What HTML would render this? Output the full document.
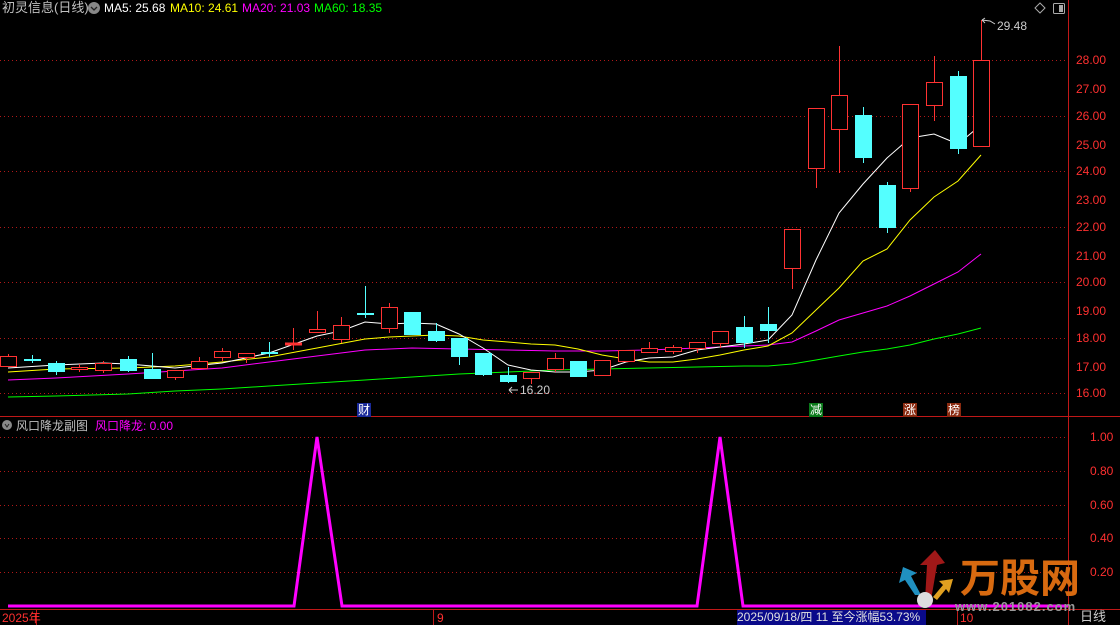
<!DOCTYPE html>
<html><head><meta charset="utf-8"><style>
html,body{margin:0;padding:0;background:#000;}
body{width:1120px;height:625px;overflow:hidden;position:relative;font-family:"Liberation Sans","Noto Sans CJK SC",sans-serif;}
.t{position:absolute;white-space:nowrap;font-size:12px;line-height:14px;}
</style></head><body>
<svg width="1120" height="625" style="position:absolute;left:0;top:0" xmlns="http://www.w3.org/2000/svg">
<g stroke="#b01818" stroke-width="1" stroke-dasharray="1,3">
<line x1="0" y1="60.5" x2="1068" y2="60.5"/><line x1="0" y1="116.5" x2="1068" y2="116.5"/>
<line x1="0" y1="171.5" x2="1068" y2="171.5"/><line x1="0" y1="227.5" x2="1068" y2="227.5"/>
<line x1="0" y1="282.5" x2="1068" y2="282.5"/><line x1="0" y1="338.5" x2="1068" y2="338.5"/>
<line x1="0" y1="393.5" x2="1068" y2="393.5"/>
<line x1="0" y1="437.5" x2="1068" y2="437.5"/><line x1="0" y1="471.5" x2="1068" y2="471.5"/>
<line x1="0" y1="505.5" x2="1068" y2="505.5"/><line x1="0" y1="538.5" x2="1068" y2="538.5"/>
<line x1="0" y1="572.5" x2="1068" y2="572.5"/>
</g>
<g stroke="#c01818" stroke-width="1">
<line x1="1068.5" y1="0" x2="1068.5" y2="625"/>
<line x1="0" y1="416.5" x2="1120" y2="416.5"/>
<line x1="0" y1="609.5" x2="1120" y2="609.5"/>
<line x1="36.5" y1="609" x2="36.5" y2="625"/><line x1="433.5" y1="609" x2="433.5" y2="625"/>
<line x1="957.5" y1="609" x2="957.5" y2="625"/>
</g>
<polyline fill="none" stroke="#00ff00" stroke-width="1" points="8,397 56,396 128,394 175,391 222,389 269,386 317,383 365,380 412,377 459,374 508,372 555,370 602,369 649,368 697,367 744,366 768,366 792,364 816,360 839,356 863,352 887,349 910,345 934,339 958,334 981,328"/>
<polyline fill="none" stroke="#ff00ff" stroke-width="1" points="8,380 56,378 128,374 175,371 222,368 269,362 317,356 365,350 412,348 459,349 508,350 555,351 602,351 649,350 697,348 744,346 768,345 792,342 816,331 839,320 863,313 887,306 910,296 934,284 958,272 981,254"/>
<polyline fill="none" stroke="#ffff00" stroke-width="1" points="8,372 56,369 128,368 175,366 222,362 269,357 317,348 365,339 389,337 412,336 436,335 459,336 483,340 508,342 531,344 555,345 578,349 602,355 626,359 649,362 673,362 697,359 720,355 744,350 768,346 792,333 816,310 839,288 863,261 887,249 910,220 934,197 958,181 981,155"/>
<polyline fill="none" stroke="#ffffff" stroke-width="1" points="8,368 56,365 103,363 128,364 152,366 175,368 222,363 269,353 317,336 341,331 365,322 389,324 412,323 436,324 459,334 483,348 508,365 531,370 555,372 578,372 602,370 626,362 649,358 673,357 697,350 720,347 744,344 768,340 792,315 816,260 839,213 863,184 887,158 910,138 934,134 958,144 981,125"/>
<g stroke-width="1" shape-rendering="crispEdges">
<g stroke="#ff3232" fill="#000">
<line x1="8.5" y1="354" x2="8.5" y2="356"/><rect x="0.5" y="356.5" width="16" height="10"/>
<line x1="79.5" y1="364" x2="79.5" y2="372"/><rect x="71.5" y="367.5" width="16" height="2"/>
<line x1="103.5" y1="361" x2="103.5" y2="373"/><rect x="95.5" y="363.5" width="16" height="7"/>
<line x1="175.5" y1="370" x2="175.5" y2="380"/><rect x="167.5" y="370.5" width="16" height="7"/>
<line x1="199.5" y1="357" x2="199.5" y2="368"/><rect x="191.5" y="361.5" width="16" height="7"/>
<line x1="222.5" y1="348" x2="222.5" y2="361"/><rect x="214.5" y="351.5" width="16" height="6"/>
<line x1="246.5" y1="353" x2="246.5" y2="363"/><rect x="238.5" y="353.5" width="16" height="4"/>
<line x1="293.5" y1="328" x2="293.5" y2="350"/><rect x="285.5" y="343" width="16" height="2" fill="#ff3232"/>
<line x1="317.5" y1="311" x2="317.5" y2="332"/><rect x="309.5" y="329.5" width="16" height="3"/>
<line x1="341.5" y1="317" x2="341.5" y2="343"/><rect x="333.5" y="325.5" width="16" height="14"/>
<line x1="389.5" y1="303" x2="389.5" y2="333"/><rect x="381.5" y="307.5" width="16" height="21"/>
<line x1="531.5" y1="372" x2="531.5" y2="384"/><rect x="523.5" y="372.5" width="16" height="6"/>
<line x1="555.5" y1="353" x2="555.5" y2="372"/><rect x="547.5" y="358.5" width="16" height="11"/>
<rect x="594.5" y="360.5" width="16" height="15"/>
<rect x="618.5" y="350.5" width="16" height="11"/>
<line x1="649.5" y1="342" x2="649.5" y2="353"/><rect x="641.5" y="348.5" width="16" height="4"/>
<line x1="673.5" y1="345" x2="673.5" y2="354"/><rect x="665.5" y="347.5" width="16" height="4"/>
<line x1="697.5" y1="342" x2="697.5" y2="353"/><rect x="689.5" y="342.5" width="16" height="6"/>
<line x1="720.5" y1="331" x2="720.5" y2="348"/><rect x="712.5" y="331.5" width="16" height="12"/>
<line x1="792.5" y1="268" x2="792.5" y2="289"/><rect x="784.5" y="229.5" width="16" height="39"/>
<line x1="816.5" y1="168" x2="816.5" y2="188"/><rect x="808.5" y="108.5" width="16" height="60"/>
<line x1="839.5" y1="46" x2="839.5" y2="173"/><rect x="831.5" y="95.5" width="16" height="34"/>
<line x1="910.5" y1="188" x2="910.5" y2="192"/><rect x="902.5" y="104.5" width="16" height="84"/>
<line x1="934.5" y1="56" x2="934.5" y2="121"/><rect x="926.5" y="82.5" width="16" height="23"/>
<line x1="981.5" y1="20" x2="981.5" y2="60"/><rect x="973.5" y="60.5" width="16" height="86"/>
</g>
<g stroke="#54ffff" fill="#54ffff">
<line x1="32.5" y1="355" x2="32.5" y2="363"/><rect x="24.5" y="359.5" width="16" height="1"/>
<line x1="56.5" y1="361" x2="56.5" y2="375"/><rect x="48.5" y="363.5" width="16" height="8"/>
<line x1="128.5" y1="356" x2="128.5" y2="372"/><rect x="120.5" y="359.5" width="16" height="11"/>
<line x1="152.5" y1="353" x2="152.5" y2="379"/><rect x="144.5" y="369.5" width="16" height="9"/>
<line x1="269.5" y1="342" x2="269.5" y2="357"/><rect x="261.5" y="352.5" width="16" height="1"/>
<line x1="365.5" y1="286" x2="365.5" y2="318"/><rect x="357.5" y="313.5" width="16" height="1"/>
<rect x="404.5" y="312.5" width="16" height="22"/>
<line x1="436.5" y1="323" x2="436.5" y2="342"/><rect x="428.5" y="331.5" width="16" height="9"/>
<line x1="459.5" y1="338" x2="459.5" y2="365"/><rect x="451.5" y="338.5" width="16" height="18"/>
<line x1="483.5" y1="353" x2="483.5" y2="376"/><rect x="475.5" y="353.5" width="16" height="21"/>
<line x1="508.5" y1="367" x2="508.5" y2="383"/><rect x="500.5" y="375.5" width="16" height="6"/>
<rect x="570.5" y="361.5" width="16" height="15"/>
<line x1="744.5" y1="316" x2="744.5" y2="348"/><rect x="736.5" y="327.5" width="16" height="15"/>
<line x1="768.5" y1="307" x2="768.5" y2="343"/><rect x="760.5" y="324.5" width="16" height="6"/>
<line x1="863.5" y1="107" x2="863.5" y2="163"/><rect x="855.5" y="115.5" width="16" height="42"/>
<line x1="887.5" y1="182" x2="887.5" y2="233"/><rect x="879.5" y="185.5" width="16" height="42"/>
<line x1="958.5" y1="71" x2="958.5" y2="154"/><rect x="950.5" y="76.5" width="16" height="72"/>
</g>
</g>
<path d="M982 20 L985 18 M982 20 L985 23 M982 20 L990 21 L995 24" fill="none" stroke="#ccc"/>
<path d="M518 390 L509 390 M509 390 L512 387 M509 390 L512 393" fill="none" stroke="#ccc"/>
<polyline fill="none" stroke="#ff00ff" stroke-width="3" points="8,606 294,606 317,437 342,606 697,606 720,437 743,606 1068,606"/>
<path d="M1040 3 L1045 8 L1040 13 L1035 8 Z" fill="none" stroke="#aaa"/>
<rect x="1053.5" y="3.5" width="11" height="10" rx="1" fill="none" stroke="#aaa"/><rect x="1059" y="5" width="4" height="7" fill="#aaa"/>
<circle cx="94" cy="8" r="6" fill="#888"/><path d="M91 7 L94 10 L97 7" stroke="#222" fill="none" stroke-width="1.3"/>
<circle cx="7" cy="425" r="5" fill="#888"/><path d="M5 424 L7 427 L9 424" stroke="#222" fill="none"/>
</svg>
<div class="t" style="left:2px;top:1px;color:#c0c0c0;font-size:13px">初灵信息(日线)</div>
<div class="t" style="left:104px;top:1px;color:#fff">MA5: 25.68</div>
<div class="t" style="left:170px;top:1px;color:#ffff00">MA10: 24.61</div>
<div class="t" style="left:242px;top:1px;color:#ff00ff">MA20: 21.03</div>
<div class="t" style="left:314px;top:1px;color:#00ff00">MA60: 18.35</div>
<div class="t" style="left:997px;top:19px;color:#ccc">29.48</div>
<div class="t" style="left:520px;top:383px;color:#ccc">16.20</div>
<div class="t" style="left:357px;top:403px;color:#fff;background:#1a2a9a;padding:0 1px">财</div>
<div class="t" style="left:809px;top:403px;color:#fff;background:#0a7a1a;padding:0 1px">减</div>
<div class="t" style="left:903px;top:403px;color:#fff;background:#8a2a10;padding:0 1px">涨</div>
<div class="t" style="left:947px;top:403px;color:#fff;background:#8a2a10;padding:0 1px">榜</div>
<div class="t" style="left:16px;top:419px;color:#c0c0c0">风口降龙副图</div>
<div class="t" style="left:95px;top:419px;color:#ff00ff">风口降龙: 0.00</div>
<div style="position:absolute;left:1076px;top:0;color:#ff3030;font-size:12px;line-height:14px">
<div class="t" style="top:53px">28.00</div><div class="t" style="top:82px">27.00</div><div class="t" style="top:109px">26.00</div>
<div class="t" style="top:138px">25.00</div><div class="t" style="top:164px">24.00</div><div class="t" style="top:193px">23.00</div>
<div class="t" style="top:220px">22.00</div><div class="t" style="top:249px">21.00</div><div class="t" style="top:275px">20.00</div>
<div class="t" style="top:304px">19.00</div><div class="t" style="top:331px">18.00</div><div class="t" style="top:360px">17.00</div>
<div class="t" style="top:386px">16.00</div>
<div class="t" style="top:430px;left:14px">1.00</div><div class="t" style="top:464px;left:14px">0.80</div>
<div class="t" style="top:498px;left:14px">0.60</div><div class="t" style="top:531px;left:14px">0.40</div>
<div class="t" style="top:565px;left:14px">0.20</div>
</div>
<div class="t" style="left:2px;top:611px;color:#ff3030">2025年</div>
<div class="t" style="left:437px;top:611px;color:#ff3030">9</div>
<div class="t" style="left:737px;top:610px;width:189px;height:15px;background:#0a0a8a;color:#e0e0e0">2025/09/18/四 11 至今涨幅53.73%</div>
<div class="t" style="left:960px;top:611px;color:#ff3030">10</div>
<div class="t" style="left:1080px;top:610px;color:#ccc;font-size:13px">日线</div>
<svg width="130" height="70" style="position:absolute;left:895px;top:545px" xmlns="http://www.w3.org/2000/svg">
<path d="M30 55 L32 20 L25 20 L40 5 L50 18 L42 20 L36 55Z" fill="#a01818"/>
<path d="M20 50 L10 35 L4 38 L8 22 L22 28 L16 31 L26 50Z" fill="#2090c0"/>
<path d="M38 52 L48 40 L44 36 L58 34 L54 48 L51 44 L42 55Z" fill="#e0a020"/>
<circle cx="30" cy="55" r="8" fill="#ddd"/>
</svg>
<div class="t" style="left:960px;top:557px;color:#d86a10;font-size:40px;line-height:44px;font-weight:bold">万股网</div>
<div class="t" style="left:955px;top:600px;color:#999;font-size:13px;font-weight:bold;letter-spacing:1px">www.201082.com</div>
</body></html>
